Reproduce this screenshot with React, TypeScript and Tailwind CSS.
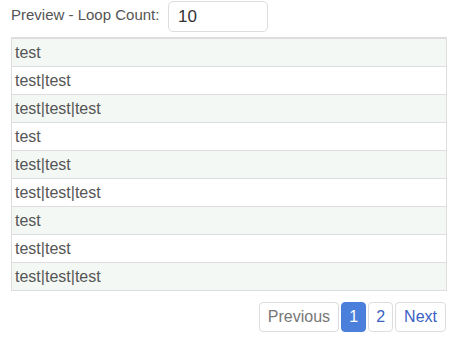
import { useState } from "react";

const rows = ["test", "test|test", "test|test|test", "test", "test|test", "test|test|test", "test", "test|test", "test|test|test"];

export default function App() {
  const [count, setCount] = useState("10");
  const [page, setPage] = useState(1);

  return (
    <div className="w-[474px] h-[345px] bg-white font-['Liberation_Sans',Arial,sans-serif] text-[#555]">
      {/* Loop count */}
      <div className="flex items-start pl-[11px] pt-[1px]">
        <label className="text-[15px] text-[#555] mt-[3px] w-[157px]">Preview - Loop Count:</label>
        <input
          value={count}
          onChange={(e) => setCount(e.target.value)}
          className="w-[100px] h-[31px] border border-[#dddddd] rounded-[5px] px-[9px] text-[17px] text-[#333] outline-none"
        />
      </div>

      {/* Preview table */}
      <div className="mx-[11px] mt-[5px] w-[436px] border-x border-t-2 border-[#dddddd]">
        {rows.map((r, i) => (
          <div
            key={i}
            className={`h-[28px] leading-[28px] px-[3px] text-[16px] border-b border-[#dddddd] ${
              i % 2 === 0 ? "bg-[#f3f8f4]" : "bg-white"
            }`}
          >
            {r}
          </div>
        ))}
      </div>

      {/* Pagination */}
      <div className="flex justify-end gap-[2px] pr-[28px] mt-[11px]">
        <button className="h-[30px] px-[8px] border border-[#dddddd] rounded-[4px] text-[16px] text-[#777] bg-white">
          Previous
        </button>
        {[1, 2].map((p) => (
          <button
            key={p}
            onClick={() => setPage(p)}
            className={`h-[30px] w-[25px] border rounded-[4px] text-[16px] ${
              page === p ? "bg-[#4a80dc] border-[#4a80dc] text-white" : "bg-white border-[#dddddd] text-[#3b5fc4]"
            }`}
          >
            {p}
          </button>
        ))}
        <button className="h-[30px] px-[8px] border border-[#dddddd] rounded-[4px] text-[16px] text-[#3b5fc4] bg-white">
          Next
        </button>
      </div>
    </div>
  );
}
